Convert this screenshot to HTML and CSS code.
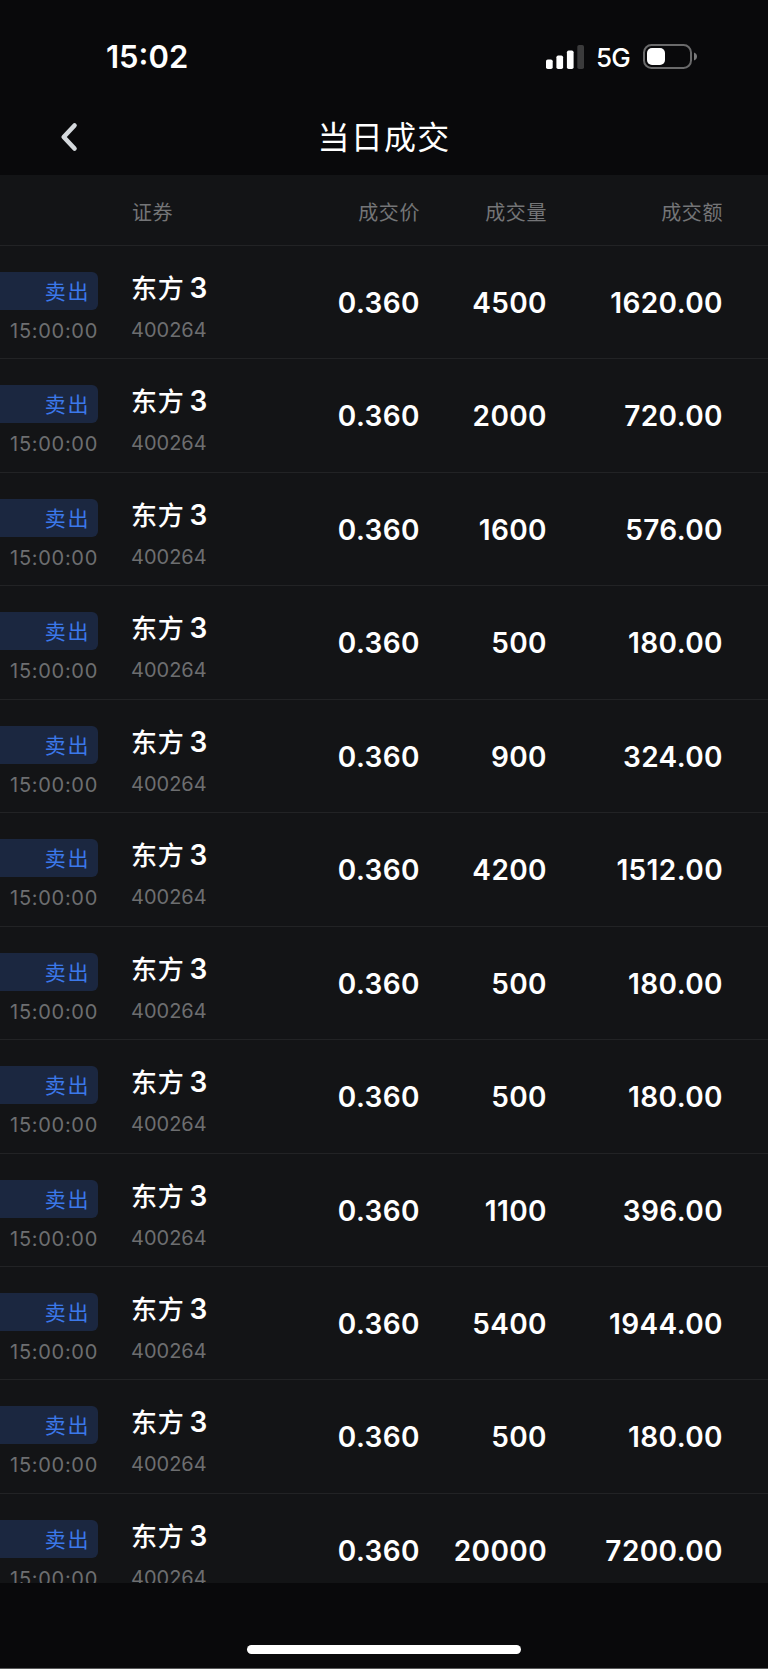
FILE: index.html
```html
<!DOCTYPE html>
<html lang="zh-CN">
<head>
  <meta charset="UTF-8" />
  <meta name="viewport" content="width=device-width, initial-scale=1.0" />
  <title>当日成交</title>
  <link rel="stylesheet" href="styles.css">
</head>
<body>
  <div class="status-bar">
    <div class="clock">15:02</div>
    <div class="status-icons">
      <svg class="signal" width="38" height="24" viewBox="0 0 38 24">
        <rect x="0" y="14.5" width="6.7" height="9.5" rx="1.8" fill="#fff" />
        <rect x="10.4" y="10.5" width="6.7" height="13.5" rx="1.8" fill="#fff" />
        <rect x="20.9" y="5.5" width="6.7" height="18.5" rx="1.8" fill="#fff" />
        <rect x="31.3" y="0" width="6.7" height="24" rx="1.8" fill="#3b3b3c" />
      </svg>
      <span class="network">5G</span>
      <svg class="battery" width="54" height="25" viewBox="0 0 54 25">
        <rect x="1" y="1" width="47" height="23" rx="7.5" fill="none" stroke="#6a6a6b" stroke-width="2" />
        <rect x="4" y="4" width="18" height="17" rx="5" fill="#fff" />
        <path d="M51 8.5c2 .7 3 2.200 3 4s-1 3.300-3 4z" fill="#7a7a7b" />
      </svg>
    </div>
  </div>

  <div class="nav-bar">
    <button class="back" aria-label="返回">
      <svg width="18" height="30" viewBox="0 0 18 30">
        <path d="M14.500 3.500L3.700 15l10.800 11.500" fill="none" stroke="#d5d9dd" stroke-width="4.600" stroke-linecap="round" stroke-linejoin="round" />
      </svg>
    </button>
    <h1>当日成交</h1>
  </div>

  <div class="deals">
    <div class="deal-head">
      <span></span>
      <span class="left">证券</span>
      <span>成交价</span>
      <span>成交量</span>
      <span>成交额</span>
    </div>

    <div class="deal">
      <div class="side"><span class="tag">卖出</span><span class="time">15:00:00</span></div>
      <div class="stock"><span class="name">东方<b>3</b></span><span class="code">400264</span></div>
      <span class="num">0.360</span><span class="num">4500</span><span class="num">1620.00</span>
    </div>
    <div class="deal">
      <div class="side"><span class="tag">卖出</span><span class="time">15:00:00</span></div>
      <div class="stock"><span class="name">东方<b>3</b></span><span class="code">400264</span></div>
      <span class="num">0.360</span><span class="num">2000</span><span class="num">720.00</span>
    </div>
    <div class="deal">
      <div class="side"><span class="tag">卖出</span><span class="time">15:00:00</span></div>
      <div class="stock"><span class="name">东方<b>3</b></span><span class="code">400264</span></div>
      <span class="num">0.360</span><span class="num">1600</span><span class="num">576.00</span>
    </div>
    <div class="deal">
      <div class="side"><span class="tag">卖出</span><span class="time">15:00:00</span></div>
      <div class="stock"><span class="name">东方<b>3</b></span><span class="code">400264</span></div>
      <span class="num">0.360</span><span class="num">500</span><span class="num">180.00</span>
    </div>
    <div class="deal">
      <div class="side"><span class="tag">卖出</span><span class="time">15:00:00</span></div>
      <div class="stock"><span class="name">东方<b>3</b></span><span class="code">400264</span></div>
      <span class="num">0.360</span><span class="num">900</span><span class="num">324.00</span>
    </div>
    <div class="deal">
      <div class="side"><span class="tag">卖出</span><span class="time">15:00:00</span></div>
      <div class="stock"><span class="name">东方<b>3</b></span><span class="code">400264</span></div>
      <span class="num">0.360</span><span class="num">4200</span><span class="num">1512.00</span>
    </div>
    <div class="deal">
      <div class="side"><span class="tag">卖出</span><span class="time">15:00:00</span></div>
      <div class="stock"><span class="name">东方<b>3</b></span><span class="code">400264</span></div>
      <span class="num">0.360</span><span class="num">500</span><span class="num">180.00</span>
    </div>
    <div class="deal">
      <div class="side"><span class="tag">卖出</span><span class="time">15:00:00</span></div>
      <div class="stock"><span class="name">东方<b>3</b></span><span class="code">400264</span></div>
      <span class="num">0.360</span><span class="num">500</span><span class="num">180.00</span>
    </div>
    <div class="deal">
      <div class="side"><span class="tag">卖出</span><span class="time">15:00:00</span></div>
      <div class="stock"><span class="name">东方<b>3</b></span><span class="code">400264</span></div>
      <span class="num">0.360</span><span class="num">1100</span><span class="num">396.00</span>
    </div>
    <div class="deal">
      <div class="side"><span class="tag">卖出</span><span class="time">15:00:00</span></div>
      <div class="stock"><span class="name">东方<b>3</b></span><span class="code">400264</span></div>
      <span class="num">0.360</span><span class="num">5400</span><span class="num">1944.00</span>
    </div>
    <div class="deal">
      <div class="side"><span class="tag">卖出</span><span class="time">15:00:00</span></div>
      <div class="stock"><span class="name">东方<b>3</b></span><span class="code">400264</span></div>
      <span class="num">0.360</span><span class="num">500</span><span class="num">180.00</span>
    </div>
    <div class="deal">
      <div class="side"><span class="tag">卖出</span><span class="time">15:00:00</span></div>
      <div class="stock"><span class="name">东方<b>3</b></span><span class="code">400264</span></div>
      <span class="num">0.360</span><span class="num">20000</span><span class="num">7200.00</span>
    </div>
  </div>

  <div class="home-area">
    <div class="home-indicator"></div>
  </div>
</body>
</html>
```
FILE: styles.css
```css
* {
  box-sizing: border-box;
}

body {
  margin: 0;
  height: 1669px;
  display: flex;
  flex-direction: column;
  overflow: hidden;
  background: #09090b;
  color: #fff;
  font-family: Inter, "Noto Sans CJK SC", sans-serif;
}

/* status bar */
.status-bar {
  height: 102px;
  padding: 11px 71px 0 106px;
  display: flex;
  align-items: center;
  justify-content: space-between;
}

.clock {
  font-size: 31px;
  font-weight: 600;
}

.status-icons {
  display: flex;
  align-items: center;
}

.network {
  margin: 2px 13px 0 12px;
  font-size: 26px;
  font-weight: 500;
  letter-spacing: -0.8px;
}

/* title */
.nav-bar {
  height: 73px;
  display: grid;
  grid-template-columns: 132px 1fr 132px;
  align-items: center;
}

.back {
  padding: 0 0 3px 60px;
  border: none;
  background: none;
  text-align: left;
  line-height: 0;
}

h1 {
  margin: 0;
  padding-bottom: 7px;
  font-size: 32px;
  font-weight: 400;
  letter-spacing: 1.2px;
  text-align: center;
}

/* list */
.deals {
  height: 1408px;
  overflow: hidden;
  background: #131416;
}

.deal-head, .deal {
  display: grid;
  grid-template-columns: 132px 138px 150px 127px 176px;
  text-align: right;
  border-bottom: 1px solid #222325;
}

.deal-head {
  height: 71px;
  padding-top: 2px;
  align-items: center;
  font-size: 20px;
  letter-spacing: 0.6px;
  color: #747577;
}

.left {
  text-align: left;
}

.deal {
  height: 113.45px;
}

.side {
  width: 98px;
  padding-top: 26px;
}

.tag {
  display: block;
  height: 38px;
  padding-right: 8px;
  border-radius: 0 6px 6px 0;
  background: #1b2740;
  color: #3b78ea;
  font-size: 21px;
  line-height: 39px;
  letter-spacing: 1.600px;
}

.time, .code {
  display: block;
  font-size: 20px;
  line-height: 24px;
  color: #6d6e70;
}

.time {
  margin-top: 9px;
  letter-spacing: 0.7px;
}

.stock {
  padding-top: 25px;
  text-align: left;
}

.name {
  display: block;
  margin-left: -1px;
  font-size: 26px;
  font-weight: 500;
  line-height: 34px;
  letter-spacing: 0.8px;
}

.name b {
  margin-left: 5px;
  font-size: 28px;
  font-weight: 600;
}

.code {
  margin: 12px 0 0 -1px;
}

.num {
  padding-top: 39px;
  font-size: 28px;
  font-weight: 600;
  line-height: 36px;
  letter-spacing: 0.4px;
}

/* bottom */
.home-area {
  flex: 1;
  padding-top: 62px;
  border-bottom: 1px solid #58595a;
}

.home-indicator {
  width: 274px;
  height: 9px;
  margin: 0 auto;
  border-radius: 5px;
  background: #fff;
}
```
